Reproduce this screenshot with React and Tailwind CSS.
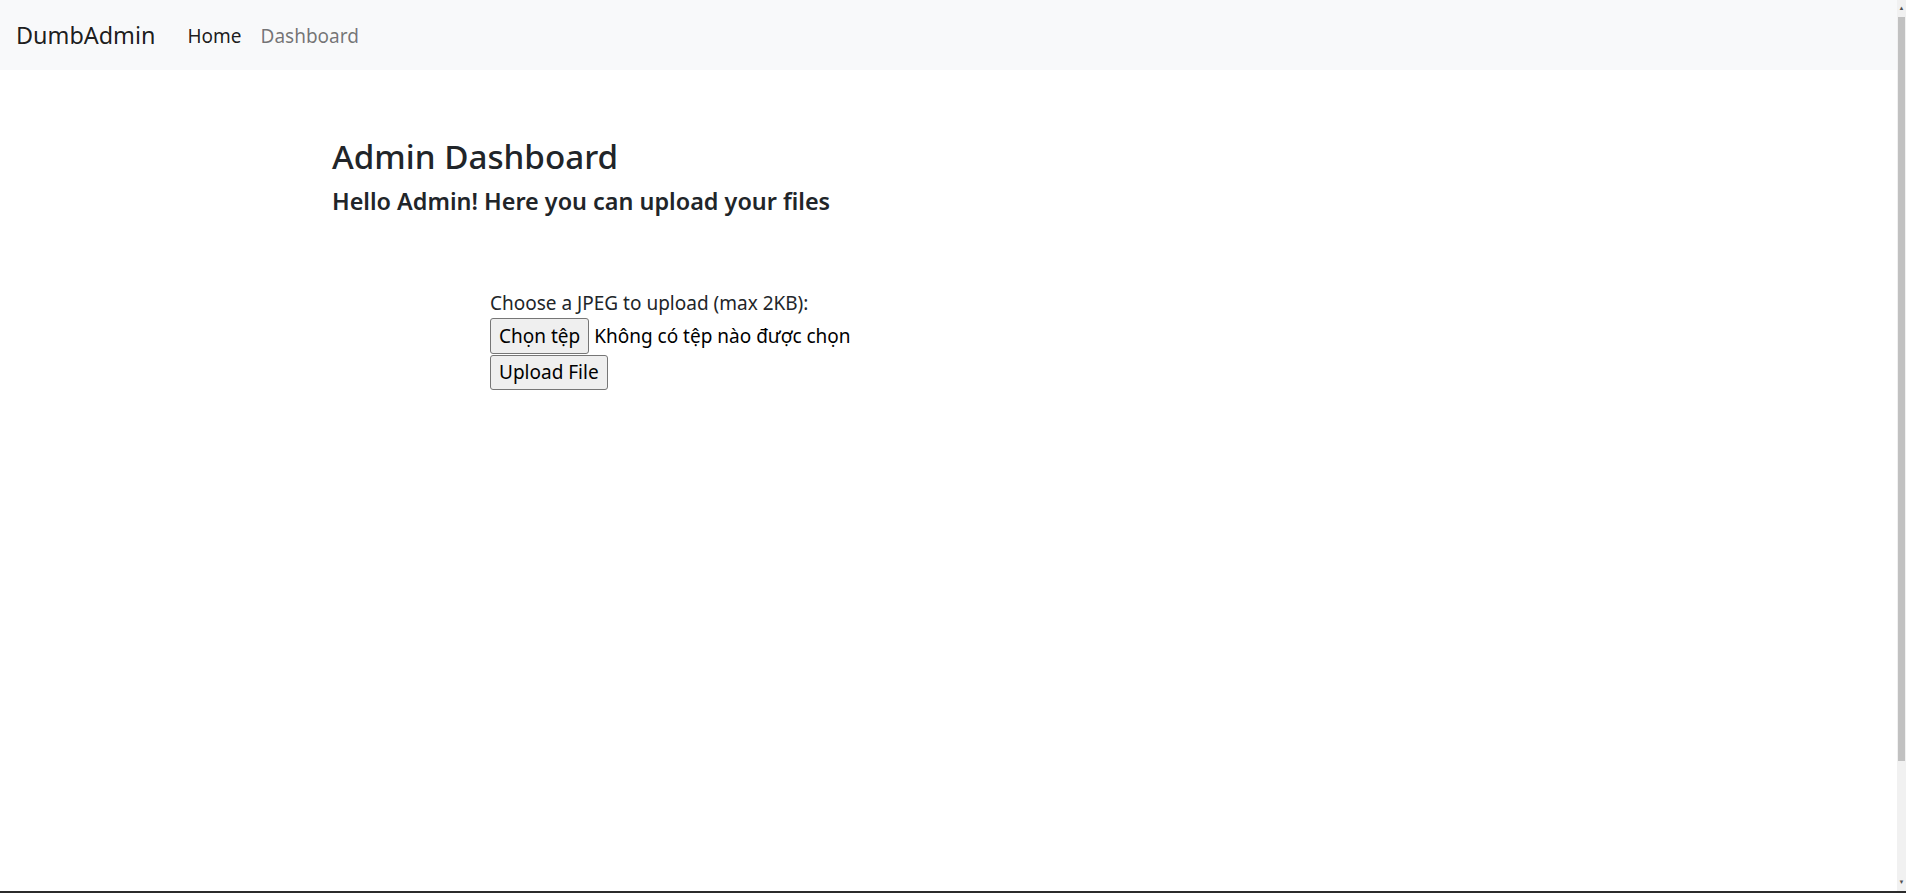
export default function App() {
  const font = { fontFamily: '"Noto Sans", "Open Sans", sans-serif' };
  return (
    <div className="flex h-[893px] w-full flex-col bg-white text-[#212529]" style={font}>
      <div className="flex min-h-0 flex-1">
        <div className="flex min-w-0 flex-1 flex-col">
          {/* Navbar */}
          <nav className="flex h-[70px] items-center bg-[#f8f9fa] px-[16px] pt-[2px]">
            <a className="mr-[22px] text-[23.4px] leading-none text-black/90">DumbAdmin</a>
            <div className="flex items-center">
              <a className="px-[10px] text-[19px] leading-none text-black/90">Home</a>
              <a className="pl-[9px] pr-[10px] text-[19px] leading-none text-black/55">Dashboard</a>
            </div>
          </nav>

          {/* Content */}
          <main className="pl-[332px] pt-[66px]">
            <h3 className="text-[33.2px] font-medium leading-[42px]">Admin Dashboard</h3>
            <h5 className="mt-[8px] text-[23.4px] font-semibold leading-[30px]">
              Hello Admin! Here you can upload your files
            </h5>

            <form className="ml-[158px] mt-[72px] flex flex-col items-start text-[19px] leading-[30px]">
              <label>Choose a JPEG to upload (max 2KB):</label>
              <div className="flex items-center">
                <button
                  type="button"
                  className="h-[36px] rounded-[3px] border border-[#767676] bg-[#efefef] px-[8px] text-[19px] leading-none text-black"
                >
                  Chọn tệp
                </button>
                <span className="ml-[5px] text-black">Không có tệp nào được chọn</span>
              </div>
              <button
                type="submit"
                className="mt-[1px] h-[35px] rounded-[3px] border border-[#767676] bg-[#efefef] px-[8px] text-[19px] leading-none text-black"
              >
                Upload File
              </button>
            </form>
          </main>
        </div>

        {/* Scrollbar */}
        <div className="relative flex w-[9px] flex-col bg-[#f1f1f1]">
          <div className="flex h-[17px] items-center justify-center text-[6px] text-[#505050]">▲</div>
          <div className="mx-[1px] h-[744px] bg-[#c1c1c1]"></div>
          <div className="flex-1"></div>
          <div className="flex h-[17px] items-center justify-center text-[6px] text-[#505050]">▼</div>
        </div>
      </div>
      <div className="h-[2px] w-full bg-[#2b2b2b]"></div>
    </div>
  );
}
